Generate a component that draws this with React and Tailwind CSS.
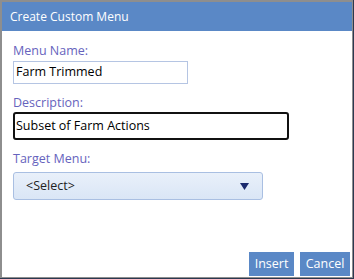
export default function App() {
  return (
    <div className="w-[354px] h-[279px] bg-[#2b3850] flex flex-col" style={{ fontFamily: '"Open Sans", "Noto Sans", sans-serif' }}>
      <div className="w-[353px] h-[278px] bg-white border-l-2 border-t-2 border-r border-b border-[#8e8e8e] flex flex-col">
        {/* Title bar */}
        <div className="h-[29px] bg-[#5a88c6] flex items-center pl-[8px] text-white text-[12px]">
          Create Custom Menu
        </div>

        <div className="flex-1 flex flex-col pl-[11px] pt-[11px]">
          <label className="text-[12.5px] leading-[17px] text-[#6663bd]">Menu Name:</label>
          <div className="mt-[2px] w-[175px] h-[23px] border border-[#b5c5e3] flex items-center pl-[2px] text-[12.5px] text-black">
            Farm Trimmed
          </div>

          <label className="mt-[10px] text-[12.5px] leading-[17px] text-[#6663bd]">Description:</label>
          <div className="mt-[1px] w-[276px] h-[28px] border-2 border-[#111] rounded-[3px] flex items-center pl-[1px] text-[12.5px] text-black">
            Subset of Farm Actions
          </div>

          <label className="mt-[10px] text-[12.5px] leading-[17px] text-[#6663bd]">Target Menu:</label>
          <div className="mt-[5px] w-[250px] h-[28px] border border-[#a9bfe2] rounded-[3px] bg-gradient-to-b from-[#e9f0fa] to-[#dae6f6] flex items-center justify-between pl-[12px] pr-[13px] text-[12.5px] text-[#222]">
            <span>&lt;Select&gt;</span>
            <svg width="9" height="7" viewBox="0 0 9 7">
              <path d="M0 0 L9 0 L4.5 7 Z" fill="#1c2b6e" />
            </svg>
          </div>

          <div className="flex-1" />
          <div className="flex justify-end gap-[6px] pr-[2px] pb-[1px]">
            <button className="w-[45px] h-[24px] bg-[#5a88c6] text-white text-[12.5px] flex items-center justify-center">Insert</button>
            <button className="w-[50px] h-[24px] bg-[#5a88c6] text-white text-[12.5px] flex items-center justify-center">Cancel</button>
          </div>
        </div>
      </div>
    </div>
  );
}
